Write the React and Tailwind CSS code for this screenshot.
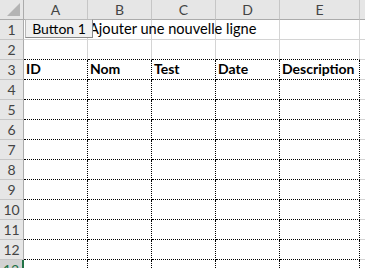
const cols = [
  { key: "A", w: "w-[64px]" },
  { key: "B", w: "w-[64px]" },
  { key: "C", w: "w-[64px]" },
  { key: "D", w: "w-[64px]" },
  { key: "E", w: "w-[80px]" },
];

const headers = ["ID", "Nom", "Test", "Date", "Description"];
const rows = Array.from({ length: 13 }, (_, i) => i + 1);

const font = { fontFamily: "Lato, 'Open Sans', sans-serif" };

const Cell = ({ row, col, children }) => {
  // table region: dotted frame around rows 3..12
  let border = "border-[#d4d4d4]";
  if (row >= 3) border = "border-black border-dotted";
  else if (row === 2) border = "border-r-[#d4d4d4] border-b-black [border-bottom-style:dotted]";
  return (
    <div
      className={`${col.w} h-[20px] shrink-0 bg-white flex items-end px-[2px] pb-[1px] leading-[18px] overflow-visible whitespace-nowrap border-r border-b ${border}`}
    >
      {children}
    </div>
  );
};

export default function App() {
  return (
    <div
      className="relative w-[365px] h-[268px] overflow-hidden bg-white text-[14px] text-black"
      style={font}
    >
      {/* column headers */}
      <div className="flex h-[20px]">
        <div className="w-[24px] h-[20px] shrink-0 bg-[#e6e6e6] border-r border-b border-[#ababab] relative">
          <div className="absolute right-[3px] bottom-[3px] w-0 h-0 border-l-[13px] border-l-transparent border-b-[13px] border-b-[#b4b4b4]" />
        </div>
        {cols.map((c) => (
          <div
            key={c.key}
            className={`${c.w} h-[20px] shrink-0 bg-[#e6e6e6] border-r border-r-[#c6c6c6] border-b border-b-[#ababab] flex items-center justify-center text-[#444] leading-none`}
          >
            {c.key}
          </div>
        ))}
        <div className="w-[40px] h-[20px] shrink-0 bg-[#e6e6e6] border-b border-b-[#ababab]" />
      </div>

      {rows.map((r) => (
        <div key={r} className="flex h-[20px]">
          <div
            className={`w-[24px] h-[20px] shrink-0 border-b border-r flex items-center justify-center leading-none ${
              r === 13
                ? "bg-[#d2d2d2] text-[#217346] border-r-[#217346] border-r-2 border-b-[#ababab]"
                : "bg-[#e6e6e6] text-[#444] border-[#ababab] border-b-[#c6c6c6]"
            }`}
          >
            {r}
          </div>
          {cols.map((c, ci) => (
            <Cell key={c.key} row={r} col={c}>
              {r === 1 && ci === 1 && (
                <span className="relative z-10 -ml-[1px] text-[14.6px]">Ajouter une nouvelle ligne</span>
              )}
              {r === 3 && <span className="font-bold">{headers[ci]}</span>}
            </Cell>
          ))}
          <div className="w-[40px] h-[20px] shrink-0 border-b border-[#d4d4d4]" />
        </div>
      ))}

      {/* form button over cell A1 */}
      <div className="absolute left-[25px] top-[19px] w-[68px] h-[19px] bg-[#f0f0f0] border border-[#b9b9b9] border-r-[#8a8a8a] border-b-[#8a8a8a] flex items-center justify-center leading-none z-20">
        Button 1
      </div>
    </div>
  );
}
